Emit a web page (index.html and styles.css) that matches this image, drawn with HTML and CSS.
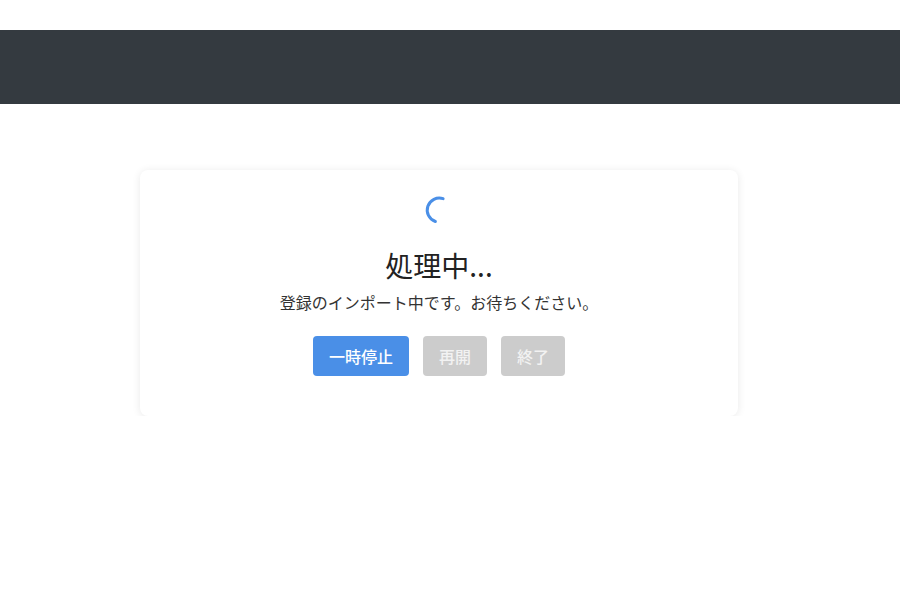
FILE: index.html
```html
<!DOCTYPE html>
<html lang="ja">
<head>
<meta charset="utf-8">
<link rel="stylesheet" href="styles.css">
</head>
<body>
<div class="top-gap"></div>
<header class="navbar"></header>
<main class="main">
  <section class="card">
    <svg class="spinner" width="30" height="30" viewBox="0 0 30 30">
      <path d="M19.1 3.7 A12 12 0 1 0 11.4 26.5" fill="none" stroke="#4a8fe7" stroke-width="3" stroke-linecap="round"/>
    </svg>
    <h1 class="title">処理中...</h1>
    <p class="message">登録のインポート中です。お待ちください。</p>
    <div class="actions">
      <button class="btn btn-primary">一時停止</button>
      <button class="btn btn-disabled">再開</button>
      <button class="btn btn-disabled">終了</button>
    </div>
  </section>
</main>
</body>
</html>
```
FILE: styles.css
```css
html, body {
  margin: 0;
  padding: 0;
  background: #ffffff;
  font-family: "Noto Sans CJK JP", "Noto Sans", sans-serif;
}
.top-gap {
  height: 30px;
}
.navbar {
  height: 74px;
  background: #343a40;
}
.main {
  display: flex;
}
.card {
  width: 598px;
  box-sizing: border-box;
  margin: 66px 0 0 140px;
  padding: 25px 24px 40px;
  background: #fff;
  border-radius: 8px;
  box-shadow: 0 1px 8px rgba(0, 0, 0, 0.09);
  display: flex;
  flex-direction: column;
  align-items: center;
}
.spinner {
  display: block;
}
.title {
  margin: 22px 0 0;
  font-size: 28px;
  line-height: 36px;
  font-weight: 400;
  color: #222;
}
.message {
  margin: 8px 0 0;
  font-size: 16px;
  line-height: 22px;
  color: #333;
}
.actions {
  margin-top: 23px;
  display: flex;
  gap: 14px;
}
.btn {
  height: 40px;
  padding: 0 16px;
  border: none;
  border-radius: 4px;
  font-family: inherit;
  font-size: 16px;
  font-weight: 500;
  color: #fff;
}
.btn-primary {
  background: #4a8fe7;
}
.btn-disabled {
  background: #cccccc;
  color: #f2f2f2;
}
```
